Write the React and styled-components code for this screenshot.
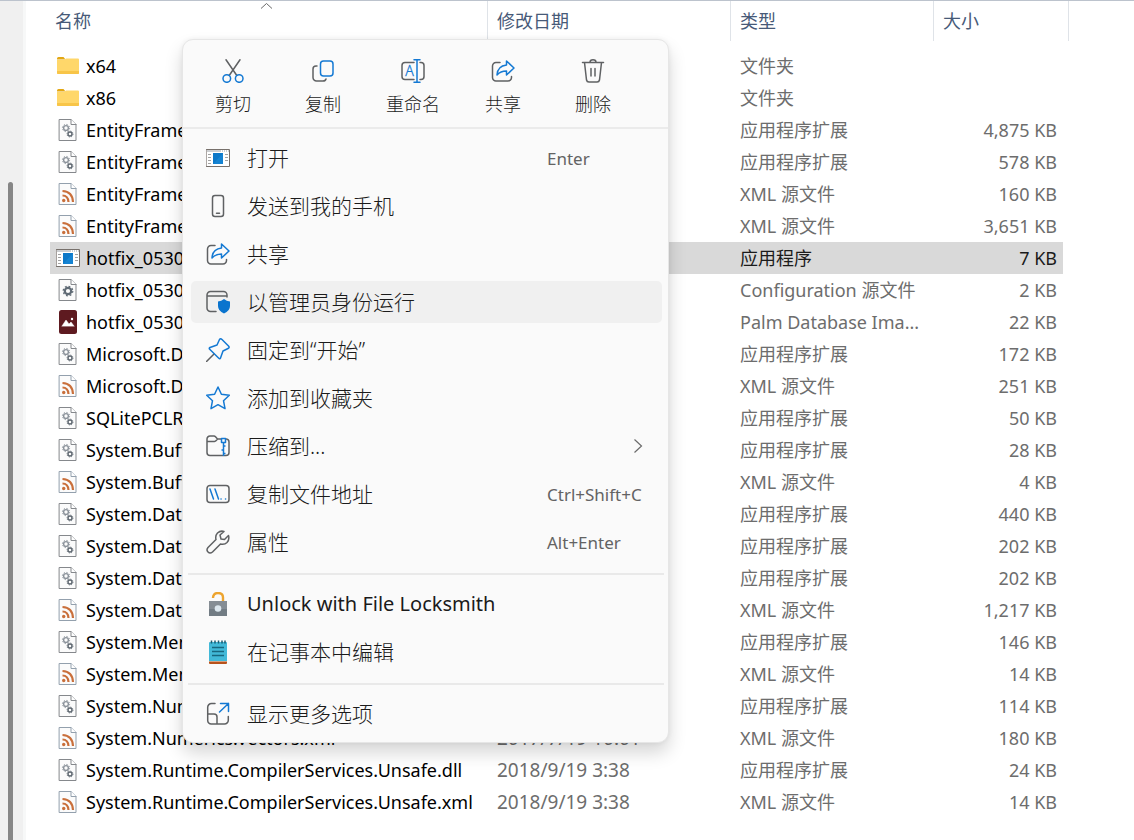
import React from "react";
import styled, { createGlobalStyle, css } from "styled-components";

const BLUE = "#1479d3";
const GREY = "#5f6163";

const GlobalStyle = createGlobalStyle`
  * {
    box-sizing: border-box;
  }

  body {
    margin: 0;
    background-color: #fff;
    font-family: "Noto Sans", "Noto Sans CJK SC", sans-serif;
    font-size: 18px;
  }
`;

const Page = styled.div`
  display: flex;
  min-height: 100vh;
  border-top: 1px solid #bcc3cd;
`;

const ScrollRail = styled.div`
  display: flex;
  flex: none;
  width: 26px;
  padding: 181px 0 0 8px;
  border-right: 3px solid #f7f8f8;
  background-color: #f0f0f0;
`;

const ScrollThumb = styled.div`
  width: 5px;
  border-radius: 3px 3px 0 0;
  background-color: #868686;
`;

const Content = styled.main`
  position: relative;
  flex: 1;
  min-width: 0;
  padding-left: 24px;
`;

const FileTable = styled.table`
  width: 100%;
  table-layout: fixed;
  border-collapse: separate;
  border-spacing: 0;
`;

const HeaderCell = styled.th`
  position: relative;
  height: 40px;
  padding: 0 0 0 ${({ $first }) => ($first ? "5px" : "9px")};
  border-right: 1px solid #dfe3e8;
  color: #475a78;
  font-weight: 400;
  line-height: 24px;
  text-align: left;
`;

const SortMark = styled.svg`
  position: absolute;
  top: 0;
  left: 50%;
  width: 13px;
  height: 10px;
  margin-left: -9px;
`;

const Spacer = styled.tr`
  height: 9px;
`;

const FileRow = styled.tr`
  height: 32px;

  td {
    padding: 0 0 0 9px;
    background-color: ${({ $selected }) => ($selected ? "#d9d9d9" : "transparent")};
    color: ${({ $selected }) => ($selected ? "#1b1b1b" : "#6d6d6d")};
    line-height: 24px;
    white-space: nowrap;
  }

  td:first-child {
    padding-left: 6px;
    color: #000;
  }

  td:nth-child(2) {
    font-size: 19px;
  }

  td:nth-child(4) {
    padding-right: 6px;
    text-align: right;
  }
`;

const FileName = styled.div`
  display: flex;
  align-items: center;
  gap: 6px;
`;

const Icon = styled.svg.attrs({ viewBox: "0 0 24 24", "aria-hidden": true })`
  flex: none;
  width: 24px;
  height: 24px;
  fill: none;
  stroke: ${GREY};
  stroke-width: 1.5;
  stroke-linecap: round;
  stroke-linejoin: round;
`;

const Menu = styled.div`
  position: absolute;
  top: 38px;
  left: 156px;
  width: 487px;
  border: 1px solid #e6e6e6;
  border-radius: 11px;
  background-color: #fafafa;
  box-shadow: 0 10px 18px rgba(0, 0, 0, 0.16), 0 0 5px rgba(0, 0, 0, 0.06);
`;

const CommandBar = styled.div`
  display: flex;
  height: 89px;
  padding: 0 30px 0 5px;
  border-bottom: 2px solid #ebebeb;
`;

const Command = styled.button`
  display: flex;
  flex: 1;
  flex-direction: column;
  align-items: center;
  gap: 9px;
  padding: 19px 0 0;
  border: 0;
  background: none;
  color: #1b1b1b;
  font: inherit;
  font-weight: 300;
  line-height: 24px;
`;

const MenuGroup = styled.div`
  display: flex;
  flex-direction: column;
  gap: 6px;
  margin: 0 4px 0 5px;
  padding: 8px 2px 10px 3px;

  & + & {
    border-top: 2px solid #e9e9e9;
  }

  &:last-child {
    padding-bottom: 7px;
  }
`;

const MenuItem = styled.button`
  display: flex;
  align-items: center;
  gap: 17px;
  height: 42px;
  padding: 0 0 0 15px;
  border: 0;
  border-radius: 5px;
  background: none;
  color: #1b1b1b;
  font: inherit;
  font-size: ${({ $latin }) => ($latin ? "20px" : "21px")};
  font-weight: ${({ $latin }) => ($latin ? 400 : 300)};
  text-align: left;

  ${({ $hovered }) =>
    $hovered &&
    css`
      background-color: #f0f0f0;
    `}
`;

const ItemLabel = styled.span`
  flex: 1;
  padding-bottom: 2px;
  white-space: nowrap;
`;

const Shortcut = styled.span`
  width: 115px;
  color: #636363;
  font-size: 17px;
  font-weight: 400;
  white-space: nowrap;
`;

const Chevron = styled.svg`
  width: 10px;
  height: 16px;
  margin-right: 19px;
`;

const FolderIcon = () => (
  <Icon>
    <path d="M1 4.500q0-1.500 1.500-1.500h5l2 2.500h-8.500z" fill="#e3a712" stroke="none" />
    <path d="M1 6h7l2-1.500h12q1 0 1 1v13.500q0 1-1 1h-20q-1 0-1-1z" fill="#ffd76a" stroke="none" />
    <path d="M1 17h22v2q0 1-1 1h-20q-1 0-1-1z" fill="#f8c548" stroke="none" />
  </Icon>
);

const Sheet = ({ color = "#85888c" }) => (
  <>
    <path d="M3.500 1.500h11.500l5 5v16h-16.500z" fill="#fbfbfb" stroke={color} strokeWidth="1" />
    <path d="M15 1.500v5h5" fill="#fff" stroke={color} strokeWidth="1" />
  </>
);

const DllIcon = () => (
  <Icon>
    <Sheet />
    <circle cx="10" cy="10" r="2.400" stroke="#8c939b" strokeWidth="1.400" />
    <circle cx="10" cy="10" r="3.600" stroke="#8c939b" strokeWidth="1" strokeDasharray="1.300 1.530" strokeLinecap="butt" />
    <circle cx="14" cy="16" r="2" stroke="#5f6871" strokeWidth="1.400" />
    <circle cx="14" cy="16" r="3" stroke="#5f6871" strokeWidth=".8" strokeDasharray="1.200 1.160" strokeLinecap="butt" />
  </Icon>
);

const XmlIcon = () => (
  <Icon>
    <Sheet color="#93a0ad" />
    <circle cx="7.700" cy="18.500" r="1.700" fill="#c96f3b" stroke="none" />
    <path d="M6.500 13.500q5.500 0 6 6.500M6.500 9q10 .5 10.500 11" stroke="#c96f3b" strokeWidth="2.200" strokeLinecap="butt" />
  </Icon>
);

const ConfigIcon = () => (
  <Icon>
    <Sheet />
    <circle cx="12" cy="13" r="3.200" stroke="#606b75" strokeWidth="2.200" />
    <circle cx="12" cy="13" r="4.800" stroke="#606b75" strokeWidth="1.200" strokeDasharray="1.880 1.880" strokeLinecap="butt" />
  </Icon>
);

const PdbIcon = () => (
  <Icon>
    <rect x="3" y="0" width="18" height="24" rx="2.500" fill="#5e1a20" stroke="none" />
    <path d="M6 16l4-6 3 4 2-2 3 4z" fill="#fff" stroke="#fff" strokeWidth=".5" />
    <circle cx="16" cy="9" r="1.200" fill="#fff" stroke="none" />
  </Icon>
);

const ExeIcon = () => (
  <Icon>
    <rect x=".5" y="3.500" width="23" height="17" fill="#fff" stroke="#77706b" strokeWidth="1" />
    <path d="M1 5h22" stroke="#9a9fa5" strokeWidth="1" strokeDasharray="14 1 1 1 1 1 1 1" strokeLinecap="butt" />
    <path d="M2 8.500h3M2 11.500h3M2 14.500h3M2 17.500h3M19 8.500h3M19 11.500h3M19 14.500h3" stroke="#a2a2a2" strokeWidth="1" strokeLinecap="butt" />
    <path d="M7 7h10v11h-10z" fill="#0c78c8" stroke="none" />
    <path d="M17 7v11h-10z" fill="#1583d2" stroke="none" />
  </Icon>
);

const CutIcon = () => (
  <Icon>
    <path d="M5 .8l10.800 15.700M19 .8l-10.800 15.700" />
    <circle cx="5.800" cy="19.500" r="3.800" stroke={BLUE} />
    <circle cx="18.200" cy="19.500" r="3.800" stroke={BLUE} />
  </Icon>
);

const CopyIcon = () => (
  <Icon>
    <path d="M6 7h-1a3 3 0 0 0-3 3v8.500a3.500 3.500 0 0 0 3.500 3.500h6.500q2.500 0 3-2" />
    <rect x="9.500" y="2" width="12.500" height="15" rx="3" stroke={BLUE} />
  </Icon>
);

const RenameIcon = () => (
  <Icon>
    <path d="M13 3.500h-9a3 3 0 0 0-3 3v11a3 3 0 0 0 3 3h9M19 3.500h1a3 3 0 0 1 3 3v11a3 3 0 0 1-3 3h-1" />
    <path d="M16 1v22M13 .8h6M13 23.200h6" stroke={BLUE} />
    <text x="8.500" y="17" fill={BLUE} stroke={BLUE} strokeWidth=".3" fontSize="14" textAnchor="middle">
      A
    </text>
  </Icon>
);

const ShareIcon = () => (
  <Icon>
    <path d="M9 3.500h-4a3.500 3.500 0 0 0-3.500 3.500v11.500a3.500 3.500 0 0 0 3.500 3.500h12a3.500 3.500 0 0 0 3.500-3.500v-1" />
    <path d="M15.500 2l7.500 7-7.500 7v-4q-6 0-9.500 4 .5-9 9.500-10z" stroke={BLUE} />
  </Icon>
);

const DeleteIcon = () => (
  <Icon>
    <path d="M1.500 3.500h21M9 3.300q0-2.500 3-2.500t3 2.500M3.500 3.500l2 17.500a2.500 2.500 0 0 0 2.500 2h8a2.500 2.500 0 0 0 2.500-2l2-17.500M10 9.500v7.500M14 9.500v7.500" />
  </Icon>
);

const PhoneIcon = () => (
  <Icon>
    <rect x="6.500" y="1.500" width="11" height="21" rx="2.500" />
    <path d="M10.500 19.200h3" />
  </Icon>
);

const AdminIcon = () => (
  <Icon>
    <path d="M10 21.500h-5.500a3.500 3.500 0 0 1-3.500-3.500v-13a3.500 3.500 0 0 1 3.500-3.500h13a3.500 3.500 0 0 1 3.500 3.500v2M1 6h20" />
    <path d="M18 9q2.500 2 6 2.500v4.500q0 5-6 7.500-6-2.500-6-7.500v-4.500q3.500-.5 6-2.500z" fill="#0a74ce" stroke="none" />
  </Icon>
);

const PinIcon = () => (
  <Icon>
    <path d="M8 16l-7.500 7.500" />
    <path d="M13.500 1.500q1-1.500 2.500 0l6.500 6.500q1.500 1.500-.5 2.500l-5 2.500-2.500 7q-.7 1.200-1.700.3l-9.100-9.100q-1-1 .3-1.700l7-2.500z" stroke={BLUE} />
  </Icon>
);

const StarIcon = () => (
  <Icon>
    <path d="M12 1l3.400 7.200 7.900 1-5.800 5.500 1.500 7.900-7-3.900-7 3.900 1.500-7.900-5.800-5.500 7.900-1z" stroke={BLUE} />
  </Icon>
);

const ZipIcon = () => (
  <Icon>
    <path d="M15 5h-3.500l-2-2.200q-.7-.8-1.500-.8h-4a3 3 0 0 0-3 3v13.500a3 3 0 0 0 3 3h16a3 3 0 0 0 3-3v-10.500a3 3 0 0 0-2.500-3M1 7.500h7.500q1 0 1.500-.8l1.500-1.700" />
    <path d="M15.500 4.500h4v4h-4zM17.500 9v13M17.500 12h2M17.500 16h-2M17.500 19.500h2" stroke={BLUE} strokeLinecap="butt" />
  </Icon>
);

const PathIcon = () => (
  <Icon>
    <rect x="1" y="3.500" width="22" height="17" rx="3" />
    <path d="M4 7l3.500 10M9 7l3.500 10M15 17h.1M19.500 17h.1" stroke={BLUE} />
  </Icon>
);

const WrenchIcon = () => (
  <Icon>
    <path d="M18 1.500q-3.500-1.200-6.500 1.500-2.500 2.700-1.500 6.500l-8 8q-2 2.500 0 4.500t4.500 0l8-8q4 1 6.500-1.500 2.700-3 1.500-7l-4 4-3.500-.5-1-4z" />
  </Icon>
);

const LockIcon = () => (
  <Icon>
    <path d="M7 6q0-5 5-5t5 4.500v4" stroke="#eda42e" strokeWidth="2.400" strokeLinecap="butt" />
    <path d="M3 9h18v15h-18z" fill="#858d94" stroke="none" />
    <path d="M3 17h18v7h-18z" fill="#727c84" stroke="none" />
    <circle cx="12" cy="16.500" r="3.300" fill="#dce7ee" stroke="none" />
  </Icon>
);

const NotepadIcon = () => (
  <Icon>
    <path d="M3 20h18v3q0 1-1 1h-16q-1 0-1-1z" fill="#b7521b" stroke="none" />
    <path d="M3 20h18v1.500h-18z" fill="#f3eee9" stroke="none" />
    <path d="M3 3q0-1 1-1h16q1 0 1 1v18h-18z" fill="#42b9d8" stroke="none" />
    <path d="M6 7.500h12M6 11.500h12M6 15.500h12" stroke="#17677f" strokeWidth="1.300" strokeLinecap="butt" />
    <path d="M5.500 .5v3M9 .5v3M12.500 .5v3M16 .5v3M19 .5v3" stroke="#195b72" strokeWidth="1.500" strokeLinecap="butt" />
  </Icon>
);

const MoreIcon = () => (
  <Icon>
    <path d="M9 1.500h-3.500a3.800 3.800 0 0 0-3.800 3.800v13.200a3.500 3.500 0 0 0 3.500 3.500h13.300a3.800 3.800 0 0 0 3.800-3.800v-3.700M1.700 12h6.300a3 3 0 0 1 3 3v7" />
    <path d="M13.500 10l9-8.500M14.500 1.500h8v8" stroke={BLUE} />
  </Icon>
);

const KINDS = {
  folder: { icon: FolderIcon, type: "文件夹" },
  dll: { icon: DllIcon, type: "应用程序扩展" },
  xml: { icon: XmlIcon, type: "XML 源文件" },
  exe: { icon: ExeIcon, type: "应用程序" },
  config: { icon: ConfigIcon, type: "Configuration 源文件" },
  pdb: { icon: PdbIcon, type: "Palm Database Ima..." },
};

const files = [
  { name: "x64", kind: "folder" },
  { name: "x86", kind: "folder" },
  { name: "EntityFramework.dll", kind: "dll", size: "4,875 KB" },
  { name: "EntityFramework.SqlServer.dll", kind: "dll", size: "578 KB" },
  { name: "EntityFramework.SqlServer.xml", kind: "xml", size: "160 KB" },
  { name: "EntityFramework.xml", kind: "xml", size: "3,651 KB" },
  { name: "hotfix_0530.exe", kind: "exe", size: "7 KB", selected: true },
  { name: "hotfix_0530.exe.config", kind: "config", size: "2 KB" },
  { name: "hotfix_0530.pdb", kind: "pdb", size: "22 KB" },
  { name: "Microsoft.Data.Sqlite.dll", kind: "dll", size: "172 KB" },
  { name: "Microsoft.Data.Sqlite.xml", kind: "xml", size: "251 KB" },
  { name: "SQLitePCLRaw.core.dll", kind: "dll", size: "50 KB" },
  { name: "System.Buffers.dll", kind: "dll", size: "28 KB" },
  { name: "System.Buffers.xml", kind: "xml", size: "4 KB" },
  { name: "System.Data.SQLite.dll", kind: "dll", size: "440 KB" },
  { name: "System.Data.SQLite.EF6.dll", kind: "dll", size: "202 KB" },
  { name: "System.Data.SQLite.Linq.dll", kind: "dll", size: "202 KB" },
  { name: "System.Data.SQLite.xml", kind: "xml", size: "1,217 KB" },
  { name: "System.Memory.dll", kind: "dll", size: "146 KB" },
  { name: "System.Memory.xml", kind: "xml", size: "14 KB" },
  { name: "System.Numerics.Vectors.dll", kind: "dll", size: "114 KB" },
  { name: "System.Numerics.Vectors.xml", kind: "xml", date: "2017/7/19 10:01", size: "180 KB" },
  { name: "System.Runtime.CompilerServices.Unsafe.dll", kind: "dll", date: "2018/9/19 3:38", size: "24 KB" },
  { name: "System.Runtime.CompilerServices.Unsafe.xml", kind: "xml", date: "2018/9/19 3:38", size: "14 KB" },
];

const commands = [
  { label: "剪切", icon: CutIcon },
  { label: "复制", icon: CopyIcon },
  { label: "重命名", icon: RenameIcon },
  { label: "共享", icon: ShareIcon },
  { label: "删除", icon: DeleteIcon },
];

const menuGroups = [
  [
    { label: "打开", icon: ExeIcon, shortcut: "Enter" },
    { label: "发送到我的手机", icon: PhoneIcon },
    { label: "共享", icon: ShareIcon },
    { label: "以管理员身份运行", icon: AdminIcon, hovered: true },
    { label: "固定到“开始”", icon: PinIcon },
    { label: "添加到收藏夹", icon: StarIcon },
    { label: "压缩到...", icon: ZipIcon, submenu: true },
    { label: "复制文件地址", icon: PathIcon, shortcut: "Ctrl+Shift+C" },
    { label: "属性", icon: WrenchIcon, shortcut: "Alt+Enter" },
  ],
  [
    { label: "Unlock with File Locksmith", icon: LockIcon, latin: true },
    { label: "在记事本中编辑", icon: NotepadIcon },
  ],
  [{ label: "显示更多选项", icon: MoreIcon }],
];

function FileList() {
  return (
    <FileTable>
      <colgroup>
        <col width="438" />
        <col width="243" />
        <col width="203" />
        <col width="129" />
        <col width="6" />
        <col />
      </colgroup>
      <thead>
        <tr>
          <HeaderCell $first>
            名称
            <SortMark viewBox="0 0 13 10" fill="none" stroke="#6b6b6b">
              <path d="M1 7.500l5.500-5 5.500 5" />
            </SortMark>
          </HeaderCell>
          <HeaderCell>修改日期</HeaderCell>
          <HeaderCell>类型</HeaderCell>
          <HeaderCell colSpan={2}>大小</HeaderCell>
        </tr>
      </thead>
      <tbody>
        <Spacer />
        {files.map((file) => {
          const { icon: FileIcon, type } = KINDS[file.kind];
          return (
            <FileRow key={file.name} $selected={file.selected}>
              <td>
                <FileName>
                  <FileIcon />
                  {file.name}
                </FileName>
              </td>
              <td>{file.date}</td>
              <td>{type}</td>
              <td>{file.size}</td>
            </FileRow>
          );
        })}
      </tbody>
    </FileTable>
  );
}

function ContextMenu() {
  return (
    <Menu>
      <CommandBar>
        {commands.map(({ label, icon: CommandIcon }) => (
          <Command key={label} type="button">
            <CommandIcon />
            {label}
          </Command>
        ))}
      </CommandBar>
      {menuGroups.map((items, index) => (
        <MenuGroup key={index}>
          {items.map(({ label, icon: ItemIcon, shortcut, submenu, hovered, latin }) => (
            <MenuItem key={label} type="button" $hovered={hovered} $latin={latin}>
              <ItemIcon />
              <ItemLabel>{label}</ItemLabel>
              {shortcut && <Shortcut>{shortcut}</Shortcut>}
              {submenu && (
                <Chevron viewBox="0 0 10 16" fill="none" stroke="#6b6b6b" strokeWidth="1.200">
                  <path d="M1.500 1.500l7 6.500-7 6.500" />
                </Chevron>
              )}
            </MenuItem>
          ))}
        </MenuGroup>
      ))}
    </Menu>
  );
}

function App() {
  return (
    <>
      <GlobalStyle />
      <Page>
        <ScrollRail>
          <ScrollThumb />
        </ScrollRail>
        <Content>
          <FileList />
          <ContextMenu />
        </Content>
      </Page>
    </>
  );
}

export default App;
